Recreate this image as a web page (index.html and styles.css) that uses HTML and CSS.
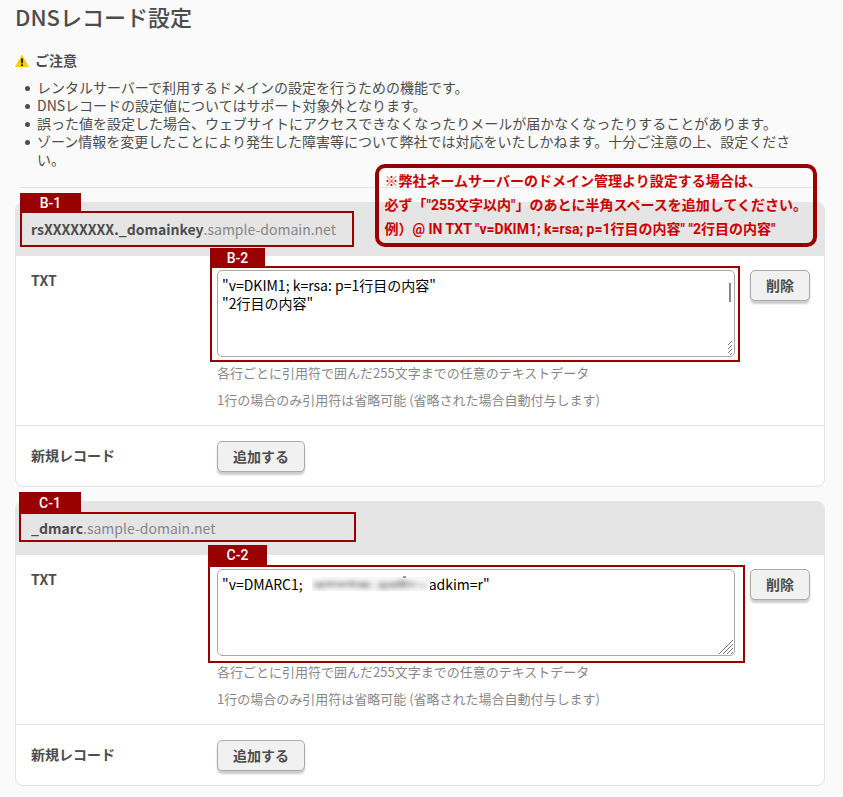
FILE: index.html
```html
<!DOCTYPE html>
<html lang="ja">

<head>
    <meta charset="UTF-8">
    <meta name="viewport" content="width=device-width, initial-scale=1.0">
    <title>DNSレコード設定</title>
    <link rel="stylesheet" href="styles.css">
</head>

<body>
    <main class="page">
        <h1>DNSレコード設定</h1>

        <section class="notice">
            <h2>
                <svg class="warn" viewBox="0 0 14 13" aria-hidden="true">
                    <path d="M7 0.5L14 13H0z" fill="#ffcc00" />
                    <path d="M5.9 4.5h2.2v3.2L7.6 9.5H6.4L5.9 7.7zM6 10.3h2V12H6z" fill="#222" />
                </svg>
                ご注意
            </h2>
            <ul>
                <li>レンタルサーバーで利用するドメインの設定を行うための機能です。</li>
                <li>DNSレコードの設定値についてはサポート対象外となります。</li>
                <li>誤った値を設定した場合、ウェブサイトにアクセスできなくなったりメールが届かなくなったりすることがあります。</li>
                <li>ゾーン情報を変更したことにより発生した障害等について弊社では対応をいたしかねます。十分ご注意の上、設定ください。</li>
            </ul>
        </section>

        <section class="panel">
            <h3 class="panel_title"><strong>rsXXXXXXXX._domainkey</strong>.sample-domain.net</h3>
            <div class="row">
                <label class="row_label" for="txt1">TXT</label>
                <div class="row_body">
                    <div class="field">
                        <textarea id="txt1" name="record[1]">"v=DKIM1; k=rsa: p=1行目の内容"
"2行目の内容"</textarea>
                        <span class="thumb"></span>
                        <svg class="grip grip_small" viewBox="0 0 6 15" aria-hidden="true">
                            <path d="M1 5l4-4M1 9l4-4M1 13l4-4M3 15l2-2" />
                        </svg>
                        <div class="mark mark_b2"><span>B-2</span></div>
                    </div>
                    <p>各行ごとに引用符で囲んだ255文字までの任意のテキストデータ</p>
                    <p>1行の場合のみ引用符は省略可能 (省略された場合自動付与します)</p>
                </div>
                <button type="button" class="btn">削除</button>
            </div>
            <div class="row row_new">
                <span class="row_label">新規レコード</span>
                <button type="button" class="btn btn_add">追加する</button>
            </div>
            <div class="mark mark_b1"><span>B-1</span></div>
            <!-- 吹き出し -->
            <div class="callout">
                ※弊社ネームサーバーのドメイン管理より設定する場合は、<br>
                必ず「"255文字以内"」のあとに半角スペースを追加してください。<br>
                例）@ IN TXT "v=DKIM1; k=rsa; p=1行目の内容" "2行目の内容"
            </div>
        </section>

        <section class="panel">
            <h3 class="panel_title"><strong>_dmarc</strong>.sample-domain.net</h3>
            <div class="row">
                <label class="row_label" for="txt2">TXT</label>
                <div class="row_body">
                    <div class="field">
                        <textarea id="txt2" name="record[2]">"v=DMARC1;　　　　　　　　　adkim=r"</textarea>
                        <!-- 値の伏せ字 -->
                        <svg class="masked" viewBox="0 0 118 16" aria-hidden="true">
                            <defs>
                                <filter id="soft" x="-10%" y="-60%" width="120%" height="220%">
                                    <feGaussianBlur stdDeviation="3 2" />
                                </filter>
                            </defs>
                            <rect y="1" width="118" height="14" fill="#f7f7f7" />
                            <g filter="url(#soft)" fill="#aaa">
                                <path d="M3 6h10v6H3zM15 5h7v6h-7zM24 6h10v5H24zM36 5h8v6h-8zM46 6h12v6H46z" />
                                <path d="M67 6h8v7h-8zM77 6h8v6h-8zM86 4h9v8h-9zM97 6h6v5h-6zM108 8h5v3h-5z" />
                            </g>
                            <path d="M91 1h3" stroke="#444" />
                        </svg>
                        <svg class="grip" viewBox="0 0 15 15" aria-hidden="true">
                            <path d="M1 15L15 1M5 15L15 5M9 15l6-6M13 15l2-2" />
                        </svg>
                        <div class="mark mark_c2"><span>C-2</span></div>
                    </div>
                    <p>各行ごとに引用符で囲んだ255文字までの任意のテキストデータ</p>
                    <p>1行の場合のみ引用符は省略可能 (省略された場合自動付与します)</p>
                </div>
                <button type="button" class="btn">削除</button>
            </div>
            <div class="row row_new">
                <span class="row_label">新規レコード</span>
                <button type="button" class="btn btn_add">追加する</button>
            </div>
            <div class="mark mark_c1"><span>C-1</span></div>
        </section>
    </main>
</body>

</html>
```

FILE: styles.css
```css
* {
    margin: 0;
    padding: 0;
    box-sizing: border-box;
}

body {
    background-color: #fafafa;
    color: #4d4d4d;
    font-family: "Noto Sans CJK JP", sans-serif;
    font-size: 14px;
    line-height: 18px;
}

.page {
    padding: 3px 18px 11px 15px;
}

h1 {
    font-size: 22px;
    font-weight: 500;
    line-height: 26px;
}

.notice {
    margin-right: 5px;
    margin-left: 5px;
    padding-top: 22px;
    padding-bottom: 19px;
    border-bottom: 1px solid #e5e5e5;
}

.notice h2 {
    display: flex;
    align-items: center;
    gap: 6px;
    margin-left: -5px;
    font-size: 14px;
    line-height: 18px;
}

.warn {
    width: 14px;
    height: 13px;
}

.notice ul {
    margin-top: 9px;
    padding-right: 14px;
    padding-left: 17px;
    list-style: none;
}

.notice li::before {
    display: inline-block;
    width: 5px;
    height: 5px;
    margin-right: 7px;
    margin-left: -12px;
    border-radius: 50%;
    background-color: #4d4d4d;
    vertical-align: 2px;
    content: "";
}

.panel {
    position: relative;
    margin-top: 14px;
    border: 1px solid #e5e5e5;
    border-radius: 8px;
    background-color: #fff;
}

.panel_title {
    padding: 17px 15px 18px;
    border-radius: 7px 7px 0 0;
    background-color: #e5e5e5;
    color: #888;
    font-size: 14px;
    font-weight: normal;
    line-height: 18px;
}

.panel_title strong {
    color: #4d4d4d;
}

.row {
    display: grid;
    grid-template-columns: 171px 1fr 60px;
    gap: 15px;
    align-items: start;
    padding: 14px 14px 16px 15px;
}

.row_new {
    grid-template-columns: 171px auto;
    justify-content: start;
    padding-top: 15px;
    padding-bottom: 14px;
    border-top: 1px solid #e5e5e5;
}

.row_label {
    padding-top: 1px;
    font-weight: bold;
}

.row_new .row_label {
    padding-top: 5px;
}

.field {
    position: relative;
}

.field textarea {
    display: block;
    width: 100%;
    height: 87px;
    padding: 5px 4px;
    border: 1px solid #aaa;
    border-radius: 5px;
    background-color: #fff;
    color: #000;
    font: inherit;
    resize: none;
    outline: none;
}

.row_body p {
    margin-top: 9px;
    color: #888;
    font-size: 13px;
    line-height: 18px;
}

.row_body .field + p {
    margin-top: 7px;
}

.btn {
    height: 31px;
    padding-bottom: 2px;
    border: 1px solid #aaa;
    border-radius: 5px;
    background-color: #f1f1f1;
    box-shadow: 0 3px 2px rgba(0, 0, 0, .2);
    color: #4d4d4d;
    font: inherit;
    font-weight: bold;
    cursor: pointer;
}

.btn_add {
    padding-right: 15px;
    padding-left: 15px;
}

.thumb {
    position: absolute;
    top: 13px;
    right: 4px;
    width: 2px;
    height: 19px;
    background-color: #888;
}

.grip {
    position: absolute;
    right: 2px;
    bottom: 2px;
    width: 15px;
    height: 15px;
    fill: none;
    stroke: #777;
}

.grip_small {
    width: 6px;
}

.masked {
    position: absolute;
    top: 7px;
    left: 95px;
    width: 118px;
    height: 16px;
}

/* 説明用の枠 */
.mark {
    position: absolute;
    border: 2px solid #900;
    font-family: Roboto, "Noto Sans CJK JP", sans-serif;
    font-weight: 500;
    pointer-events: none;
}

.mark span {
    position: absolute;
    bottom: 100%;
    left: -2px;
    height: 20px;
    background-color: #900;
    color: #fff;
    text-align: center;
    line-height: 20px;
}

.mark_b1 {
    top: 8px;
    left: 4px;
    width: 334px;
    height: 36px;
}

.mark_b1 span {
    width: 61px;
}

.mark_c1 {
    top: 10px;
    left: 3px;
    width: 337px;
    height: 30px;
}

.mark_c1 span {
    width: 62px;
    height: 22px;
    line-height: 22px;
}

.mark_b2 {
    top: -4px;
    right: -5px;
    left: -7px;
    height: 96px;
}

.mark_b2 span {
    width: 55px;
}

.mark_c2 {
    top: -4px;
    right: -10px;
    left: -9px;
    height: 98px;
}

.mark_c2 span {
    width: 59px;
    height: 22px;
}

.callout {
    position: absolute;
    top: -39px;
    right: 7px;
    padding: 1px 6px 2px;
    border: 4px solid #900;
    border-radius: 10px;
    color: #c00;
    font-family: Roboto, "Noto Sans CJK JP", sans-serif;
    font-weight: bold;
    line-height: 24px;
    white-space: nowrap;
}
```
